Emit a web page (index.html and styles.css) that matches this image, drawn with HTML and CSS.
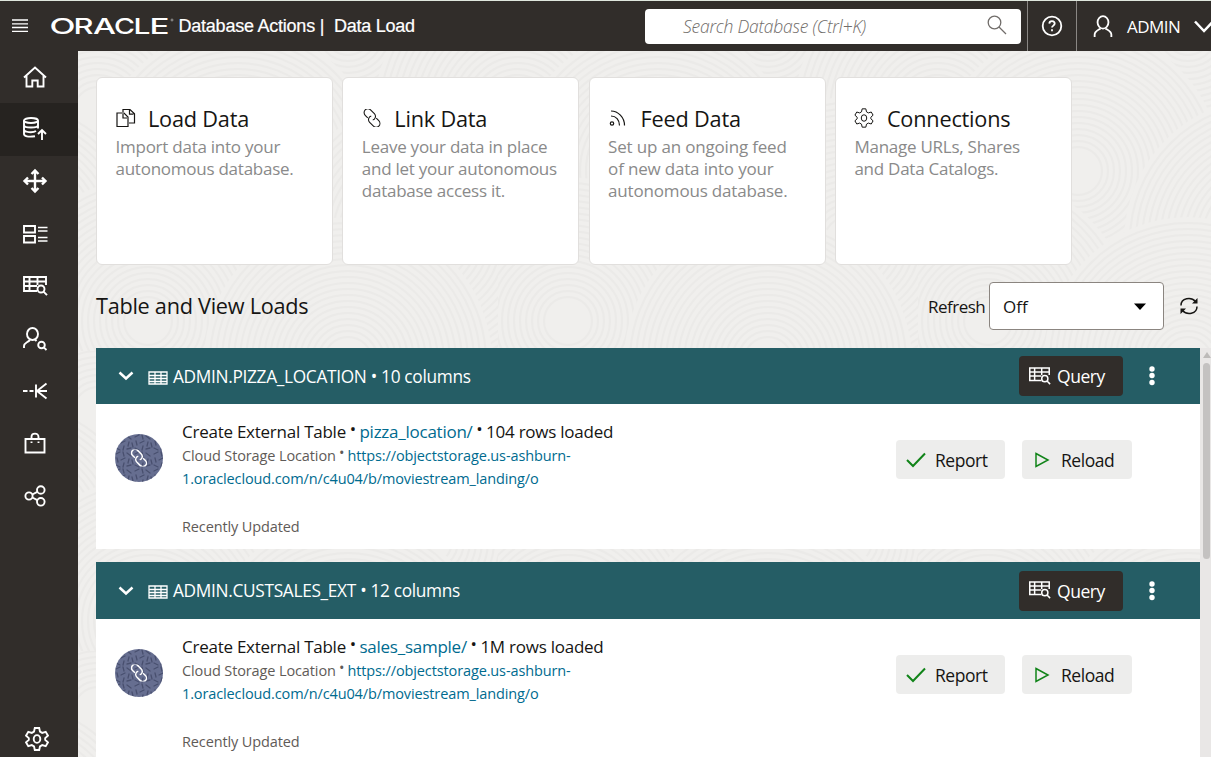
FILE: index.html
```
<!DOCTYPE html>
<html lang="en">
<head>
<meta charset="utf-8">
<title>Database Actions | Data Load</title>
<link rel="stylesheet" href="styles.css">
</head>
<body>
<svg class="defs" width="0" height="0" aria-hidden="true">
  <symbol id="gear" viewBox="0 0 24 24"><path d="M9.800 1h4.400l.8 3.600 2.200 1.300 3.500-1.100 2.200 3.800-2.700 2.500v1.800l2.700 2.500-2.200 3.800-3.500-1.100-2.200 1.300-.8 3.600H9.800L9 19.400l-2.200-1.300-3.500 1.100-2.200-3.800 2.700-2.500v-1.800L1.100 8.600l2.200-3.800 3.500 1.100L9 4.600z"/><ellipse cx="12" cy="12" rx="3.300" ry="3.900"/></symbol>
  <symbol id="link" viewBox="0 0 20 20"><g transform="rotate(45 10 10)"><path d="M6.500 13.200H2.500a4.200 4.200 0 0 1 0-8.400H8.500a4.200 4.200 0 0 1 3.700 6.200"/><path d="M13.500 6.800h4a4.200 4.200 0 0 1 0 8.400H11.500a4.200 4.200 0 0 1-3.700-6.200"/></g></symbol>
  <symbol id="query" viewBox="0 0 26 22"><path d="M15 16H2V2h22v8M2 6.500h22M2 11h13M7.500 2v14M15.500 2v8"/><circle cx="19" cy="14" r="3.500"/><path d="m21.500 16.700 3.500 3.500"/></symbol>
  <symbol id="table" viewBox="0 0 20 14"><path d="M1 1h18v12H1zM1 4.500h18M1 7.500h18M1 10.500h18M7 1v12M13 1v12"/></symbol>
  <symbol id="person" viewBox="0 0 22 24"><ellipse cx="11" cy="8" rx="6" ry="6.800"/><path d="M1.800 24v-2.500c0-3.500 3-4.500 6.500-6.800M20.200 24v-2.500c0-3.500-3-4.500-6.500-6.800"/></symbol>
  <symbol id="badge" viewBox="0 0 48 48">
    <pattern id="dashes" width="19" height="17" patternUnits="userSpaceOnUse"><path d="m1 3 4-2M8 1l1 4M12 2l4 3M2 7l1 4M6 9l4-2M14 8l-1 4M1 14l4 2M9 12l-1 4M17 9l1 4M12 15l4-1" stroke="#484f6e" stroke-width="1.300" stroke-linecap="round"/></pattern>
    <circle cx="24" cy="24" r="24" fill="#666e90" stroke="none"/><circle cx="24" cy="24" r="24" fill="url(#dashes)" stroke="none"/>
  </symbol>
</svg>

<header class="topbar">
  <svg class="menu" width="16" height="14"><path d="M0 1h16M0 4.800h16M0 8.500h16M0 12.300h16"/></svg>
  <svg class="logo" width="124" height="24"><text y="20" lengthAdjust="spacingAndGlyphs" x="-1.500" textLength="26">O</text><text y="20" lengthAdjust="spacingAndGlyphs" x="22.500" textLength="20">R</text><text y="20" lengthAdjust="spacingAndGlyphs" x="42" textLength="23">A</text><text y="20" lengthAdjust="spacingAndGlyphs" x="63" textLength="21">C</text><text y="20" lengthAdjust="spacingAndGlyphs" x="82.500" textLength="17">L</text><text y="20" lengthAdjust="spacingAndGlyphs" x="98.500" textLength="20">E</text><circle class="mark" cx="121" cy="6" r="1"/></svg>
  <h1 class="product">Database Actions | <span>Data Load</span></h1>
  <div class="search"><span>Search Database (Ctrl+K)</span>
    <svg class="ic" width="20" height="20"><circle cx="7.500" cy="7.500" r="6.300"/><path d="m12 12 7 7"/></svg></div>
  <div class="help"><svg class="ic" width="22" height="22"><circle cx="11" cy="11" r="9.300"/><path d="M8.300 8.600c.1-3.500 5.400-3.300 5.400 0 0 2-2.700 2-2.700 4"/><path d="M11 14.200v2"/></svg></div>
  <div class="user"><svg class="ic" width="20" height="24"><use href="#person"/></svg><span>ADMIN</span><svg class="ic chev" width="20" height="13"><path d="m1 1.500 9 9.500 9-9.500"/></svg></div>
</header>

<div class="shell">
  <nav class="side">
    <a><svg class="ic" width="24" height="22"><path d="M1 11.500 12 1.500l11 10M3.500 10v10.500h5.800v-6h5.400v6h5.800V10"/></svg></a>
    <a class="on"><svg class="ic" width="24" height="24"><ellipse cx="8" cy="3.500" rx="7" ry="2.500"/><path d="M1 3.500V17c0 2 4 3.400 11 2.200M15 3.500v8M1 8c0 3.400 14 3.400 14 0M1 12.500c0 3 9 3.400 12 1.500M19 23V13m-4 4 4-4 4 4"/></svg></a>
    <a><svg class="ic move" width="24" height="24"><path d="M12 2v20M2 12h20M8.500 5 12 1.500 15.500 5M8.500 19l3.500 3.500 3.500-3.500M5 8.500 1.500 12 5 15.500M19 8.500l3.500 3.500-3.500 3.500"/></svg></a>
    <a><svg class="ic" width="25" height="20"><path d="M1 2h11v6.500H1zM1 12h11v6.500H1z"/><path class="thin" d="M15 3.500h9.500M15 7h9.500M15 13.500h9.500M15 17h9.500"/></svg></a>
    <a><svg class="ic" width="26" height="22"><use href="#query"/></svg></a>
    <a><svg class="ic" width="24" height="24"><ellipse cx="9.500" cy="7" rx="5.500" ry="6"/><path d="M1 21v-2c0-3 3-3.200 6-6M12 12.500l1.500 1.500"/><circle cx="18.500" cy="18" r="3.300"/><path d="m20.800 20.300 2.700 2.700"/></svg></a>
    <a><svg class="ic" width="24" height="18"><path d="M0 9h4.500M6.500 9h4M13 2.500v13M13 9h11M23.500 1.500 14 9l9.500 7.500"/></svg></a>
    <a><svg class="ic" width="22" height="22"><path d="M1.500 7h19v13.500h-19zM7.500 7V5c0-4.500 7-4.500 7 0v2M7.500 9.500v1.600M14.500 9.500v1.600"/></svg></a>
    <a><svg class="ic" width="22" height="22"><circle cx="5" cy="11" r="3.600"/><circle cx="16.800" cy="5" r="3.800"/><circle cx="16.800" cy="16.800" r="3.800"/><path d="m8.300 9.500 5-2.700M8.300 12.500l5 2.700"/></svg></a>
    <a class="settings"><svg class="ic" width="24" height="24"><use href="#gear"/></svg></a>
  </nav>

  <main class="main">
    <svg class="waves" width="1133" height="706" aria-hidden="true">
      <defs>
        <g id="rings"><circle r="144" class="base"/><circle r="138"/><circle r="132"/><circle r="126"/><circle r="120"/><circle r="114"/><circle r="108"/><circle r="102"/><circle r="96"/><circle r="90"/><circle r="84"/><circle r="78"/><circle r="72"/><circle r="66"/><circle r="60"/><circle r="54"/><circle r="48"/><circle r="42"/><circle r="36"/><circle r="30"/><circle r="24"/></g>
        <pattern id="swirl" width="420" height="300" patternUnits="userSpaceOnUse">
          <use href="#rings" x="60" y="10"/><use href="#rings" x="270" y="-20"/><use href="#rings" x="440" y="60"/><use href="#rings" x="20" y="60"/><use href="#rings" x="160" y="120"/><use href="#rings" x="350" y="190"/><use href="#rings" x="-70" y="190"/><use href="#rings" x="70" y="270"/><use href="#rings" x="270" y="310"/>
        </pattern>
      </defs>
      <rect width="1133" height="706" fill="url(#swirl)"/>
    </svg>

    <section class="cards">
      <article class="card"><h2><svg class="ic" width="20" height="20"><path d="M1 5h7l4 4v9.500H1zM7 6v4h4M7 4V1.500h7l4.500 4.200V15H13M13.500 2v4.200h4"/></svg>Load Data</h2><p>Import data into your<br>autonomous database.</p></article>
      <article class="card"><h2><svg class="ic" width="20" height="20"><use href="#link" x="1" y="1" width="18" height="18"/></svg>Link Data</h2><p>Leave your data in place<br>and let your autonomous<br>database access it.</p></article>
      <article class="card feed"><h2><svg class="ic" width="20" height="20"><circle cx="4" cy="15.500" r="1.700"/><path d="M3 8c5 0 8.500 4 8.500 9.500M3 3C10 3 16.500 9 16.500 17.500"/></svg>Feed Data</h2><p>Set up an ongoing feed<br>of new data into your<br>autonomous database.</p></article>
      <article class="card"><h2><svg class="ic" width="20" height="20"><use href="#gear"/></svg>Connections</h2><p>Manage URLs, Shares<br>and Data Catalogs.</p></article>
    </section>

    <section class="bar">
      <h2>Table and View Loads</h2>
      <span class="lbl">Refresh</span>
      <div class="select"><span>Off</span><svg width="12" height="7"><path d="M0 .5h12L6 7z"/></svg></div>
      <svg class="ic reload" width="20" height="20"><path d="M2 9.500C2 2 12 .5 16.500 5.500M18 10.500C18 18 8 19.500 3.500 14.500"/><path class="solid" d="M18.500 2v5.500H13zM1.500 18v-5.500H7z"/></svg>
    </section>

    <section class="results">
      <div class="list">
        <article class="item">
          <div class="head"><svg class="ic down" width="16" height="10"><path d="m1.500 1.500 6.500 6 6.500-6"/></svg><svg class="ic tbl" width="20" height="14"><use href="#table"/></svg><h3>ADMIN.PIZZA_LOCATION • 10 columns</h3>
            <button class="btn query"><svg class="ic" width="23" height="20"><use href="#query"/></svg>Query</button><svg class="dots" width="8" height="22"><circle cx="4" cy="4" r="2.700"/><circle cx="4" cy="10.500" r="2.700"/><circle cx="4" cy="17.500" r="2.700"/></svg></div>
          <div class="body">
            <svg class="badge" width="48" height="48"><use href="#badge"/><use href="#link" x="15.500" y="15.500" width="17" height="17"/></svg>
            <div class="info"><p class="title">Create External Table <i>•</i> <a>pizza_location/</a> <i>•</i> 104 rows loaded</p>
              <p class="loc">Cloud Storage Location <i>•</i> <a>https://objectstorage.us-ashburn-<br>1.oraclecloud.com/n/c4u04/b/moviestream_landing/o</a></p><p class="upd">Recently Updated</p></div>
            <button class="btn report"><svg class="ic" width="20" height="16"><path d="m1 8 6 6L19 1.500"/></svg>Report</button>
            <button class="btn again"><svg class="ic" width="14" height="16"><path d="M1 1.500 13 8 1 14.500z"/></svg>Reload</button>
          </div>
        </article>
        <article class="item">
          <div class="head"><svg class="ic down" width="16" height="10"><path d="m1.500 1.500 6.500 6 6.500-6"/></svg><svg class="ic tbl" width="20" height="14"><use href="#table"/></svg><h3>ADMIN.CUSTSALES_EXT • 12 columns</h3>
            <button class="btn query"><svg class="ic" width="23" height="20"><use href="#query"/></svg>Query</button><svg class="dots" width="8" height="22"><circle cx="4" cy="4" r="2.700"/><circle cx="4" cy="10.500" r="2.700"/><circle cx="4" cy="17.500" r="2.700"/></svg></div>
          <div class="body">
            <svg class="badge" width="48" height="48"><use href="#badge"/><use href="#link" x="15.500" y="15.500" width="17" height="17"/></svg>
            <div class="info"><p class="title">Create External Table <i>•</i> <a>sales_sample/</a> <i>•</i> 1M rows loaded</p>
              <p class="loc">Cloud Storage Location <i>•</i> <a>https://objectstorage.us-ashburn-<br>1.oraclecloud.com/n/c4u04/b/moviestream_landing/o</a></p><p class="upd">Recently Updated</p></div>
            <button class="btn report"><svg class="ic" width="20" height="16"><path d="m1 8 6 6L19 1.500"/></svg>Report</button>
            <button class="btn again"><svg class="ic" width="14" height="16"><path d="M1 1.500 13 8 1 14.500z"/></svg>Reload</button>
          </div>
        </article>
      </div>
      <div class="scroll"><svg width="8" height="6"><path d="M4 0l4 6H0z"/></svg><div class="thumb"></div></div>
    </section>
  </main>
</div>
</body>
</html>
```

FILE: styles.css
```
* { box-sizing: border-box; }
body { margin: 0; width: 1211px; height: 757px; overflow: hidden; font-family: "Open Sans", "Noto Sans", sans-serif; color: #161513; }
h1, h2, h3, p { margin: 0; font-weight: 400; white-space: nowrap; }
svg { display: block; flex: none; overflow: visible; }
.defs { position: absolute; }
.ic { fill: none; stroke: currentColor; stroke-width: 1.5; }

.topbar { display: flex; align-items: center; height: 51px; border-top: 1px solid #dfe7dd; background: #312d2a; color: #fff; overflow: hidden; }
.topbar > * { flex: none; }
.menu { margin-left: 12px; stroke: #fff; stroke-width: 1.3; }
.logo { margin-left: 23px; }
.logo text { font: 500 21.5px Inter, sans-serif; fill: #fff; }
.logo .mark { fill: none; stroke: #bbb; stroke-width: .7; }
.product { width: 466.5px; margin-left: 3.5px; font: 18px "Liberation Sans", sans-serif; letter-spacing: -.23px; -webkit-text-stroke: .2px #fff; }
.product span { margin-left: 5px; }
.search { display: flex; align-items: center; justify-content: space-between; width: 376px; height: 35px; padding: 0 14px 0 38px; border-radius: 4px; background: #fff; color: #716d6a; font-size: 17.5px; font-style: italic; font-weight: 300; letter-spacing: -.23px; }
.search .ic { stroke-width: 1.3; margin-top: -3px; }
.help { display: flex; align-items: center; justify-content: center; align-self: stretch; width: 50px; margin-left: 6px; border-left: 1px solid #8a8784; border-right: 1px solid #8a8784; }
.help .ic { stroke-width: 1.8; }
.user { display: flex; align-items: center; padding-left: 16px; font-size: 17px; letter-spacing: -.55px; }
.user span { width: 54px; margin: 0 13px 0 14px; }
.user .ic { stroke-width: 2; }
.user .chev { stroke-width: 2.5; }

.shell { display: flex; height: 706px; }
.side { display: flex; flex-direction: column; width: 78px; background: #312d2a; color: #fff; }
.side a { display: flex; align-items: center; justify-content: center; height: 52.4px; padding: 0 8px 1px 0; }
.side .on { background: #262320; }
.side .ic { stroke-width: 1.9; }
.side .move { stroke-width: 2.4; }
.side .thin { stroke-width: 1.5; }
.side .settings { margin-top: auto; height: 36px; padding: 0 4px 0 0; }

.main { position: relative; flex: 1; min-width: 0; padding-left: 18px; overflow: hidden; background: #f0efed; }
.waves { position: absolute; left: 0; top: 0; }
.waves circle { fill: none; stroke: #ebeae8; stroke-width: 2; }
.waves .base { fill: #f0efed; stroke: none; }
.cards, .bar, .results { position: relative; }
.cards { display: grid; grid-template-columns: repeat(4, 237px); gap: 9.3px; padding-top: 26px; }
.card { height: 188px; padding: 24px 18.5px; border: 1px solid #e1dfdd; border-radius: 6px; background: #fff; }
.card h2 { display: flex; align-items: center; gap: 12.5px; height: 33px; font-size: 21.7px; letter-spacing: -.2px; }
.card .ic { margin-top: -2px; stroke-width: 1.2; }
.card p { padding-top: 1px; color: #8a8a8a; font-size: 17px; line-height: 22px; letter-spacing: -.25px; }
.feed p { letter-spacing: -.18px; }

.bar { display: flex; align-items: center; height: 48px; margin-top: 17px; }
.bar h2 { width: 832px; padding-bottom: 2px; font-size: 21.7px; letter-spacing: -.28px; }
.lbl { width: 57px; margin-right: 4px; font-size: 17px; letter-spacing: -.5px; }
.select { display: flex; align-items: center; justify-content: space-between; width: 175px; height: 48px; padding: 0 17px 0 13px; border: 1px solid #8b8580; border-radius: 4px; background: #fff; font-size: 17px; }
.reload { margin-left: 15px; }
.reload .solid { fill: currentColor; stroke: none; }

.results { display: flex; margin-top: 18px; }
.list { display: flex; flex-direction: column; gap: 13px; width: 1104px; }
.head { display: flex; align-items: center; height: 56px; padding-left: 22px; background: #255d65; color: #fff; }
.item + .item .head { height: 57px; }
.down { stroke-width: 2.5; }
.tbl { margin: 3px 5px 0 14px; stroke-width: 1.3; }
.head h3 { width: 846px; font-size: 17.3px; letter-spacing: -.32px; }
.btn { display: flex; align-items: center; height: 39px; padding: 0; border: 0; border-radius: 4px; font: 17.5px "Open Sans", sans-serif; letter-spacing: -.45px; }
.query { gap: 6px; width: 104px; height: 40px; padding-left: 9px; background: #312d2a; color: #fff; }
.query .ic { margin-top: -1px; stroke-width: 1.7; }
.dots { margin-left: 25px; fill: #fff; }
.body { display: flex; align-items: flex-start; height: 145px; padding: 15px 0 0 19px; background: #fff; }
.badge { margin: 15px 19px 0 0; fill: none; stroke: #fff; stroke-width: 1.7; }
.info { width: 714px; }
.title { font-size: 17px; line-height: 25px; letter-spacing: -.25px; }
.loc, .upd { color: #5f5b58; font-size: 14.5px; line-height: 23px; letter-spacing: -.12px; }
.upd { margin-top: 25px; }
.info a { color: #006b8f; }
.info i { margin: 0 -.5px; font-style: normal; position: relative; top: -3px; }
.report, .again { margin-top: 21px; background: #ededec; color: #161513; }
.report { gap: 9px; width: 109px; padding-left: 10px; }
.again { gap: 12px; width: 110px; margin-left: 17px; padding-left: 13px; }
.report .ic { stroke: #118419; stroke-width: 2; }
.again .ic { stroke: #118419; }
.scroll { display: flex; flex-direction: column; align-items: center; gap: 5px; width: 11px; height: 409px; padding: 4px 0 0 2px; background: #e9e7e6; }
.scroll svg { fill: #bdbbb9; }
.thumb { width: 7px; height: 196px; border-radius: 4px; background: #c4c2c1; }
```
